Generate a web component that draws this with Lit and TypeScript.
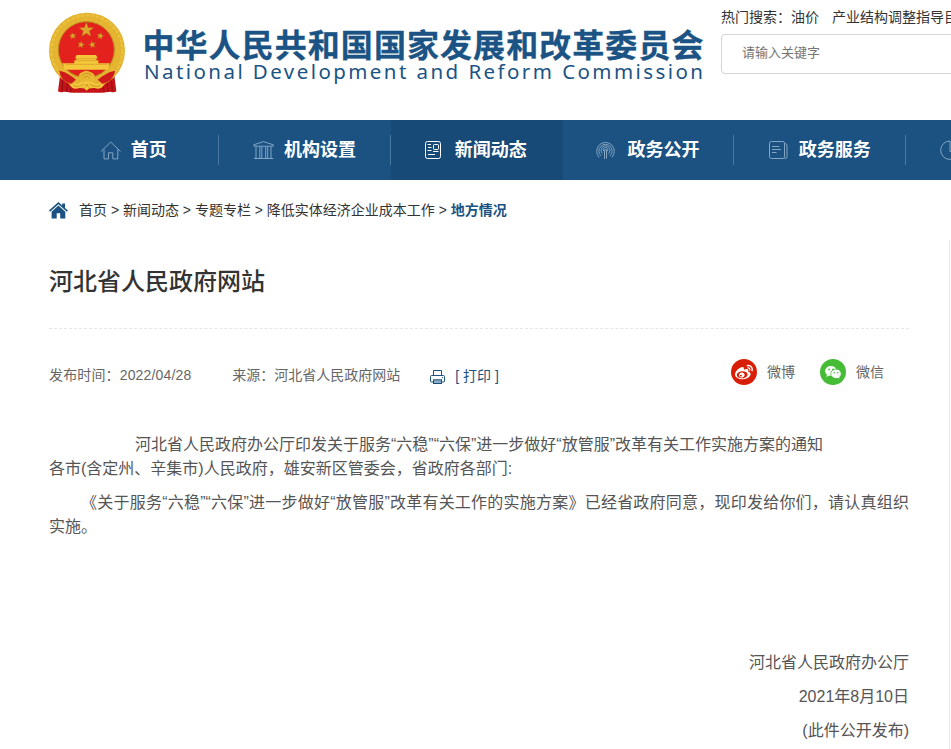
import { LitElement, html, svg, css } from "lit";
import { customElement } from "lit/decorators.js";
import { classMap } from "lit/directives/class-map.js";

const star = (cx: number, cy: number, r: number, turn = 0) => {
  const pts: string[] = [];
  for (let i = 0; i < 10; i++) {
    const a = ((i * 36 - 90 + turn) * Math.PI) / 180;
    const d = i % 2 ? r * 0.42 : r;
    pts.push(`${(cx + d * Math.cos(a)).toFixed(1)},${(cy + d * Math.sin(a)).toFixed(1)}`);
  }
  return svg`<polygon points=${pts.join(" ")} fill="#dba82c" stroke="#b5651c" stroke-width="1"/>`;
};

const emblem = html`<svg class="emblem" viewBox="0 0 300 285" width="100" height="95">
  <path d="M62 196 L54 259 Q62 264 72 260 L98 263 L185 263 L212 260 Q222 264 229 259 L221 196Z" fill="#c4141a"/>
  <path d="M70 206L66 258M84 214L80 260M200 214L204 260M213 206L217 258M94 236L92 262M190 236L192 262" stroke="#8f0d12" stroke-width="3" fill="none"/>
  <circle cx="141" cy="137" r="114" fill="#e2b22f"/>
  <circle cx="141" cy="137" r="106" fill="none" stroke="#ebc03c" stroke-width="8" stroke-dasharray="11 4"/>
  <circle cx="141" cy="137" r="93" fill="none" stroke="#e6b633" stroke-width="12" stroke-dasharray="14 3"/>
  <circle cx="139" cy="134" r="84" fill="#e3211d" stroke="#b98a22" stroke-width="3"/>
  ${star(139, 75, 23)}${star(98, 93, 11, -12)}${star(181, 93, 11, 12)}${star(123, 119, 11, 12)}${star(157, 119, 11, -12)}
  <path d="M110 150H168L173 160H105ZM109 160H169V166H175V175H209L204 194H74L68 175H103V166H109Z" fill="#f4c83a"/>
  <path d="M106 161H172M103 167H175M76 178H204" stroke="#cc8920" stroke-width="1.5"/>
  <path d="M58 197C82 201 96 215 108 224L94 236C74 232 60 218 58 197ZM225 197C200 201 186 215 173 224L187 236C208 232 222 218 225 197Z" fill="#cf1a1b"/>
  <path d="M116 214Q118 202 128 201Q139 193 150 201Q162 203 164 214Q162 228 140 232Q118 228 116 214Z" fill="#e9b833"/>
  <path d="M124 212Q140 198 156 212M130 220Q140 208 150 220" fill="none" stroke="#c4861f" stroke-width="2"/>
  <path d="M88 237Q110 242 122 232Q140 225 158 232Q171 242 194 237Q184 256 164 249L150 247L140 257L130 247L116 250Q96 256 88 237Z" fill="#f3c83c"/>
  <path d="M100 243Q120 247 132 237M182 243Q162 247 149 237M135 247L140 237L146 247" fill="none" stroke="#c17620" stroke-width="2"/>
</svg>`;

const icons = {
  home: svg`<path d="M1 11.5 10.7 2 20.5 11.5M4 9.5V18.9H8.5V12.8H12.8V18.9H17.8V9.5"/>`,
  bank: svg`<path d="M.8 6.2V4.8L10.5 1.6 20.3 4.8V6.2ZM3 6.5V18M6.8 6.5V18M8.8 6.5V18M12.7 6.5V18M14.7 6.5V18M18 6.5V18M1 18.5H20.3"/>`,
  news: svg`<rect x="1.5" y="1.5" width="15" height="17" rx="2"/><rect x="9.5" y="4.5" width="5" height="5" rx=".8"/><path d="M3.5 4.5H7M4 7.5H7.5M3.5 10.5H7.5M9 11.5H14.5M4 14.5H11"/>`,
  signal: svg`<path d="M8.5 18.8V9.8H10.5V18.8M6.4 13.4A4.4 4.4 0 1 1 12.6 13.4M5 15.8A6.6 6.6 0 1 1 14 15.8M3.2 17.4A8.8 8.8 0 1 1 15.8 17.4M7.7 11.2A2.3 2.3 0 1 1 11.3 11.2"/>`,
  paper: svg`<rect x="1.5" y="1.5" width="15" height="17" rx="1.8"/><path d="M16.5 3.5Q19 3.5 19 5.5V16.8Q19 18.6 16.5 18.6M4 6.5H11.5M4 9.5H13M4 12.5H8.5"/>`,
  chart: svg`<path d="M11 1A9.2 9.2 0 1 0 20 11.5H11ZM14 1.6A9 9 0 0 1 19.6 8H14Z"/>`,
};

const navItems = [
  { label: "首页", icon: icons.home },
  { label: "机构设置", icon: icons.bank },
  { label: "新闻动态", icon: icons.news, active: true },
  { label: "政务公开", icon: icons.signal },
  { label: "政务服务", icon: icons.paper },
  { label: "发改数据", icon: icons.chart },
];

@customElement("site-nav")
class SiteNav extends LitElement {
  static styles = css`
    :host { display: flex; height: 60px; background: #1b5282; padding-left: 48px; overflow: hidden; }
    .item { flex: none; box-sizing: border-box; width: 171.4px; padding-right: 1px; display: flex; align-items: center; justify-content: center; position: relative; color: #fff; font-size: 18px; font-weight: 700; line-height: 58px; white-space: nowrap; }
    .item::after { content: ""; position: absolute; right: 0; top: 15px; height: 30px; width: 1px; background: #4a7aa2; }
    .item.active { background: #174a77; padding-right: 3px; width: 172px; }
    .item.active::after { display: none; }
    svg { flex: none; width: 21px; height: 20px; margin-right: 10px; fill: none; stroke: #85a6c3; stroke-width: 1; }
    .active svg { stroke: #fff; }
  `;
  render() {
    return navItems.map(
      (n) => html`<div class=${classMap({ item: true, active: !!n.active })}><svg viewBox="0 0 21 20">${n.icon}</svg><span>${n.label}</span></div>`
    );
  }
}

@customElement("app-root")
class AppRoot extends LitElement {
  static styles = css`
    :host { display: block; width: 951px; height: 749px; overflow: hidden; background: #fff; color: #333; font: 14px "Liberation Sans", "Noto Sans CJK SC", sans-serif; }
    header { height: 120px; display: flex; box-sizing: border-box; padding: 5px 0 0 40px; overflow: hidden; }
    .emblem { flex: none; }
    .name { flex: none; width: 581px; height: 95px; fill: #1b5484; }
    .zh { font: 700 32px "Noto Sans CJK SC", sans-serif; stroke: #1b5484; stroke-width: .3px; }
    .en { font: 400 20.5px "Noto Sans", sans-serif; }
    .search { flex: none; width: 400px; }
    .hot { line-height: 24px; white-space: nowrap; }
    .hot a { margin-right: 13px; }
    .box { margin-top: 5px; height: 38px; border: 1px solid #d5d5d5; border-radius: 4px; padding-left: 20px; line-height: 36px; font-size: 13px; color: #757575; }
    .crumbs { display: flex; height: 60px; align-items: center; padding-left: 49px; line-height: 20px; }
    .crumbs svg { margin-right: 11px; }
    .crumbs span { margin-right: auto; padding-bottom: 1px; }
    .crumbs b { color: #1b5282; }
    .main { box-sizing: border-box; width: 950px; height: 509px; padding: 0 40px 0 49px; border-right: 1px solid #e6e6e6; overflow: hidden; }
    h1 { margin: 0; height: 88px; line-height: 84px; font-size: 24px; font-weight: 500; border-bottom: 1px dashed #e6e6e6; }
    .meta { display: flex; height: 104px; align-items: flex-start; box-sizing: border-box; color: #666; line-height: 20px; }
    .meta > span { margin-top: 36px; white-space: nowrap; }
    .date { letter-spacing: .15px; }
    .meta > .source { margin-left: 41px; }
    .print { display: flex; align-items: center; margin: 37px 0 0 30px; color: #1b5282; }
    .print svg { margin: 2px 10px 0 0; }
    .share { display: flex; align-items: center; margin: 30px 25px 0 auto; height: 26px; }
    .share svg { margin-right: 10px; }
    .share span { margin-right: 25px; }
    .share span:last-child { margin-right: 0; }
    p { margin: 0 0 10px; font-size: 16px; line-height: 24px; min-height: 24px; color: #555; text-align: justify; }
    .center { text-align: center; margin: 0; }
    .indent { text-indent: 32px; }
    .right { text-align: right; }
  `;
  render() {
    return html`
      <header lang="zh-CN">
        ${emblem}
        <svg class="name" viewBox="140 5 581 95">
          <text class="zh" x="142.5" y="57.2" textLength="561" lengthAdjust="spacing">中华人民共和国国家发展和改革委员会</text>
          <text class="en" x="144" y="79" textLength="559" lengthAdjust="spacing">National Development and Reform Commission</text>
        </svg>
        <div class="search">
          <div class="hot">热门搜索：<a>油价</a><a>产业结构调整指导目录</a></div>
          <div class="box">请输入关键字</div>
        </div>
      </header>
      <site-nav lang="zh-CN"></site-nav>
      <nav class="crumbs" lang="zh-CN">
        <svg width="19" height="17" viewBox="0 0 19 17" fill="#1b5282">
          <path d="M0 8.6 9.4 0 13.2 3.4V1.5H16V6L19 8.6 17.9 9.8 9.4 2.2 1.1 9.8Z"/>
          <path d="M9.4 3.6 16.3 9.8V16.5H11.2V11.3H7.7V16.5H2.6V9.8Z"/>
        </svg>
        <span>首页 &gt; 新闻动态 &gt; 专题专栏 &gt; 降低实体经济企业成本工作 &gt; <b>地方情况</b></span>
      </nav>
      <div class="main" lang="zh-CN">
        <h1>河北省人民政府网站</h1>
        <div class="meta">
          <span class="date">发布时间：2022/04/28</span>
          <span class="source">来源：河北省人民政府网站</span>
          <div class="print">
            <svg width="15" height="14" viewBox="0 0 15 14" fill="none" stroke="#1b5282">
              <path d="M3.5 5.5V.5H11.5V5.5M3 12H1.5Q.5 12 .5 11V6.5Q.5 5.5 1.5 5.5H13.5Q14.5 5.5 14.5 6.5V11Q14.5 12 13.5 12H12M12 7.5H13"/>
              <rect x="3.5" y="9.8" width="8" height="3.7" fill="#8fabc4"/>
            </svg>[ 打印 ]
          </div>
          <div class="share">
            <svg width="26" height="26" viewBox="0 0 26 26">
              <circle cx="13" cy="13" r="13" fill="#d81e06"/>
              <path fill="#fff" transform="translate(4 4.7) scale(.035)" d="M407 177.6c7.6-24-13.4-46.8-37.4-41.7-22 4.8-28.8-28.1-7.1-32.8 50.1-10.9 92.3 37.1 76.5 84.8-6.8 21.2-38.8 10.8-32-10.3zM214.8 446.7C108.5 446.7 0 395.3 0 310.4c0-44.3 28-95.4 76.3-143.7C176 67 279.5 65.8 249.9 161c-4 13.1 12.3 5.7 12.3 6 79.5-33.6 140.5-16.8 114 51.4-3.7 9.4 1.1 10.9 8.3 13.1 135.7 42.3 34.8 215.2-169.7 215.2zm143.7-146.3c-5.4-55.7-78.5-94-163.4-85.7-84.8 8.6-148.8 60.3-143.4 116s78.5 94 163.4 85.7c84.8-8.6 148.8-60.3 143.4-116zM347.9 35.1c-25.9 5.6-16.8 43.7 8.3 38.3 72.3-15.2 134.8 52.8 111.7 124-7.4 24.2 29.1 37 37.4 12 31.9-99.8-55.1-195.9-157.4-174.3zm-78.5 311c-17.1 38.8-66.8 60-109.1 46.3-40.8-13.1-58-53.4-40.3-89.7 17.7-35.4 63.1-55.4 103.4-45.1 42 10.8 63.1 50.2 46 88.5zm-86.3-30c-12.9-5.4-30 .3-38 12.9-8.3 12.9-4.3 28 8.6 34 13.1 6 30.8.3 39.1-12.9 8-13.1 3.7-28.3-9.7-34z"/>
            </svg><span>微博</span>
            <svg width="26" height="26" viewBox="0 0 26 26">
              <circle cx="13" cy="13" r="13" fill="#46bb36"/>
              <path d="M7 15.5 6.4 18 9.2 16.6Z" fill="#fff"/>
              <ellipse cx="10.9" cy="12" rx="5.8" ry="5.1" fill="#fff"/>
              <ellipse cx="16" cy="14.8" rx="5.3" ry="4.7" fill="#fff" stroke="#46bb36" stroke-width=".8"/>
              <path d="M17 18.5 19.5 19.6 19 17.6Z" fill="#fff"/>
              <g fill="#46bb36"><circle cx="9" cy="10.5" r=".9"/><circle cx="13" cy="10.5" r=".9"/><circle cx="14.3" cy="13.7" r=".8"/><circle cx="17.7" cy="13.7" r=".8"/></g>
            </svg><span>微信</span>
          </div>
        </div>
        <p class="center">河北省人民政府办公厅印发关于服务“六稳”“六保”进一步做好“放管服”改革有关工作实施方案的通知</p>
        <p>各市(含定州、辛集市)人民政府，雄安新区管委会，省政府各部门:</p>
        <p class="indent">《关于服务“六稳”“六保”进一步做好“放管服”改革有关工作的实施方案》已经省政府同意，现印发给你们，请认真组织实施。</p>
        <p></p><p></p><p></p>
        <p class="right">河北省人民政府办公厅</p>
        <p class="right">2021年8月10日</p>
        <p class="right">(此件公开发布)</p>
      </div>`;
  }
}
